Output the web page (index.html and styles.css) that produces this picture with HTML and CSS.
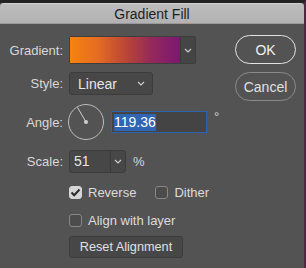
FILE: index.html
```html
<!DOCTYPE html>
<html lang="en">
<head>
  <meta charset="UTF-8" />
  <title>Gradient Fill</title>
  <link rel="stylesheet" href="styles.css">
</head>
<body>
  <div class="dialog">
    <div class="titlebar">Gradient Fill</div>
    <div class="content">
      <div class="fields">
        <div class="row row-gradient">
          <span class="label">Gradient:</span>
          <div class="gradient-picker">
            <div class="swatch"></div>
            <div class="drop">
              <svg width="8" height="5" viewBox="0 0 8 5"><path d="M1 1 L4 4 L7 1" fill="none" stroke="#cfcfcf" stroke-width="1.1"/></svg>
            </div>
          </div>
        </div>
        <div class="row row-style">
          <span class="label">Style:</span>
          <div class="select">
            <span>Linear</span>
            <svg width="8" height="5" viewBox="0 0 8 5"><path d="M1 1 L4 4 L7 1" fill="none" stroke="#cfcfcf" stroke-width="1.1"/></svg>
          </div>
        </div>
        <div class="row row-angle">
          <span class="label">Angle:</span>
          <svg class="dial" width="38" height="38" viewBox="0 0 38 38">
            <circle cx="19" cy="19" r="17.5" fill="none" stroke="#bdbdbd" stroke-width="1"/>
            <line x1="19" y1="19" x2="10.5" y2="4.5" stroke="#cfcfcf" stroke-width="1"/>
            <circle cx="19" cy="19" r="2" fill="#cfcfcf"/>
          </svg>
          <div class="angle-input"><span class="sel">119.36</span></div>
          <span class="unit deg">°</span>
        </div>
        <div class="row row-scale">
          <span class="label">Scale:</span>
          <div class="combo">
            <span class="combo-val">51</span>
            <span class="combo-drop">
              <svg width="8" height="5" viewBox="0 0 8 5"><path d="M1 1 L4 4 L7 1" fill="none" stroke="#cfcfcf" stroke-width="1.1"/></svg>
            </span>
          </div>
          <span class="unit">%</span>
        </div>
        <div class="row row-checks">
          <label class="check"><span class="box checked">
            <svg width="11" height="9" viewBox="0 0 11 9"><path d="M1.5 4.5 L4.2 7.2 L9.5 1.5" fill="none" stroke="#2b2b2b" stroke-width="2"/></svg>
          </span>Reverse</label>
          <label class="check dither"><span class="box"></span>Dither</label>
        </div>
        <div class="row row-align">
          <label class="check"><span class="box"></span>Align with layer</label>
        </div>
        <div class="row row-reset">
          <button class="btn-reset" type="button">Reset Alignment</button>
        </div>
      </div>
      <div class="actions">
        <button class="pill ok" type="button">OK</button>
        <button class="pill cancel" type="button">Cancel</button>
      </div>
    </div>
  </div>
</body>
</html>
```

FILE: styles.css
```css
html, body {
  margin: 0;
  padding: 0;
  background: #222;
}
.dialog {
  width: 306px;
  height: 268px;
  background: #535353;
  font-family: "Liberation Sans", Arial, sans-serif;
  font-size: 13px;
  color: #d8d8d8;
  overflow: hidden;
  border-top: 3px solid #222;
  box-sizing: border-box;
  border-right: 2px solid #4a2a45;
}
.titlebar {
  height: 21px;
  line-height: 20px;
  text-align: center;
  background: linear-gradient(#bdbdbd, #b2b2b2);
  border-top: 1px solid #d0d0d0;
  border-bottom: 1px solid #9a9a9a;
  color: #1e1e1e;
  font-size: 14px;
  border-radius: 4px 4px 0 0;
  box-sizing: border-box;
}
.content {
  display: flex;
  padding-top: 12px;
}
.fields {
  width: 228px;
}
.row {
  display: flex;
  align-items: center;
}
.label {
  width: 63px;
  text-align: right;
  margin-right: 6px;
  flex-shrink: 0;
}
.row-gradient {
  height: 28px;
}
.gradient-picker {
  display: flex;
  height: 28px;
  width: 127px;
  border: 1px solid #3e3e3e;
  box-sizing: border-box;
  border-radius: 2px;
}
.swatch {
  flex: 1;
  background: linear-gradient(to right, #f7840e 0%, #e56c22 25%, #bb4735 50%, #93285b 75%, #7b1772 100%);
}
.drop {
  width: 14px;
  background: #454545;
  border-left: 1px solid #3a3a3a;
  display: flex;
  align-items: center;
  justify-content: center;
}
.row-style {
  margin-top: 8px;
  height: 23px;
}
.select {
  width: 84px;
  height: 23px;
  box-sizing: border-box;
  background: #474747;
  border: 1px solid #3c3c3c;
  border-radius: 3px;
  display: flex;
  align-items: center;
  justify-content: space-between;
  padding: 0 7px 0 8px;
  color: #e6e6e6;
  font-size: 14px;
}
.row-angle {
  margin-top: 8px;
  height: 38px;
}
.row-angle .label {
  margin-right: 0;
}
.dial {
  margin-left: 4px;
}
.angle-input {
  margin-left: 6px;
  width: 96px;
  height: 22px;
  box-sizing: border-box;
  border: 1px solid #2b63b1;
  background: #444;
  display: flex;
  align-items: center;
  padding-left: 2px;
}
.sel {
  background: #2f65b2;
  color: #fff;
  font-size: 14px;
  line-height: 17px;
}
.unit {
  margin-left: 7px;
  color: #d8d8d8;
}
.deg {
  align-self: flex-start;
  margin-top: 6px;
}
.row-scale {
  margin-top: 9px;
  height: 23px;
}
.combo {
  display: flex;
  width: 57px;
  height: 23px;
  box-sizing: border-box;
  background: #474747;
  border: 1px solid #3c3c3c;
  border-radius: 3px;
}
.combo-val {
  flex: 1;
  padding-left: 4px;
  line-height: 21px;
  font-size: 14px;
  color: #e6e6e6;
}
.combo-drop {
  width: 14px;
  border-left: 1px solid #3a3a3a;
  display: flex;
  align-items: center;
  justify-content: center;
}
.row-checks {
  margin-top: 12px;
  padding-left: 69px;
  height: 15px;
}
.check {
  display: flex;
  align-items: center;
  font-size: 13px;
  color: #dcdcdc;
}
.box {
  width: 13px;
  height: 13px;
  box-sizing: border-box;
  border: 1px solid #888;
  border-radius: 3px;
  background: #4c4c4c;
  margin-right: 6px;
  display: flex;
  align-items: center;
  justify-content: center;
}
.box.checked {
  background: #d6d6d6;
  border-color: #d6d6d6;
}
.dither {
  margin-left: 19px;
}
.row-align {
  margin-top: 13px;
  padding-left: 69px;
  height: 15px;
}
.row-reset {
  margin-top: 8px;
  padding-left: 69px;
}
.btn-reset {
  width: 114px;
  height: 22px;
  background: #474747;
  border: 1px solid #3c3c3c;
  border-radius: 3px;
  color: #e0e0e0;
  font-family: "Liberation Sans", Arial, sans-serif;
  font-size: 12.7px;
  padding: 0;
}
.actions {
  margin-left: 7px;
  display: flex;
  flex-direction: column;
  gap: 8px;
  margin-top: -1px;
}
.pill {
  width: 61px;
  height: 29px;
  border-radius: 15px;
  background: #535353;
  font-family: "Liberation Sans", Arial, sans-serif;
  font-size: 14px;
  color: #f0f0f0;
  padding: 0;
}
.ok {
  border: 1.5px solid #e2e2e2;
}
.cancel {
  border: 1px solid #8a8a8a;
  color: #e0e0e0;
}
```
